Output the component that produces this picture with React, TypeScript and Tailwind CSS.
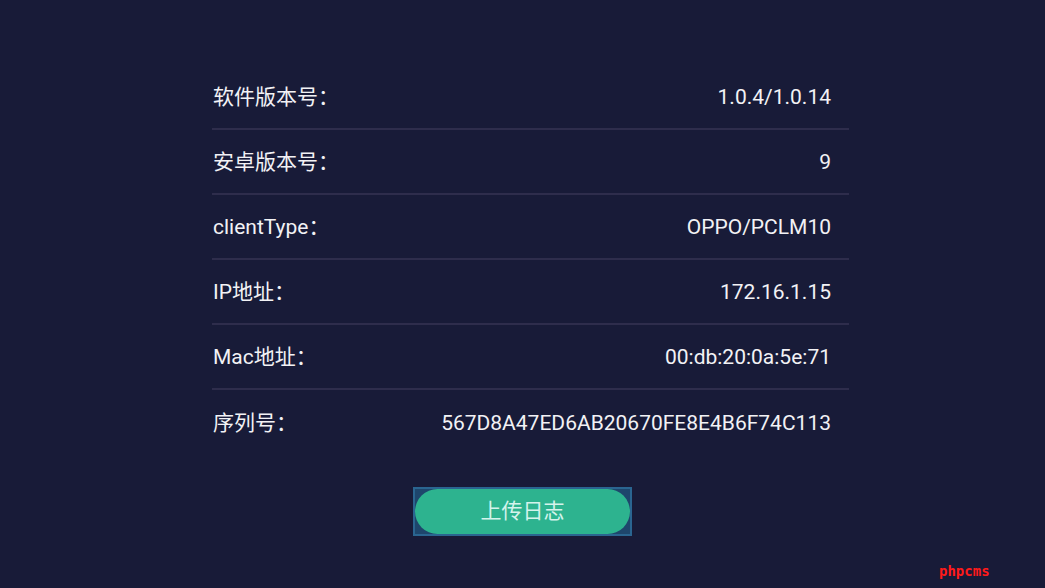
const rows = [
  { label: '软件版本号：', value: '1.0.4/1.0.14' },
  { label: '安卓版本号：', value: '9' },
  { label: 'clientType：', value: 'OPPO/PCLM10' },
  { label: 'IP地址：', value: '172.16.1.15' },
  { label: 'Mac地址：', value: '00:db:20:0a:5e:71' },
  { label: '序列号：', value: '567D8A47ED6AB20670FE8E4B6F74C113' },
];

export default function App() {
  return (
    <div
      className="relative w-[1045px] h-[588px] bg-[#181b38] text-white overflow-hidden"
      style={{ fontFamily: 'Roboto, "Noto Sans CJK SC", sans-serif' }}
    >
      <div className="flex flex-col items-start pt-[65px] pl-[212px]">
        <div className="w-[637px] flex flex-col">
          {rows.map((row, i) => (
            <div
              key={row.label}
              className={`h-[65px] flex items-center justify-between pl-[1px] pr-[18px] pt-[3px] text-[21px] text-[#f2f2f5] ${
                i < rows.length - 1 ? 'border-b-2 border-[#2e2d4c]' : ''
              }`}
            >
              <span>{row.label}</span>
              <span>{row.value}</span>
            </div>
          ))}
        </div>
        <div className="mt-[32px] ml-[201px] w-[219px] h-[49px] border-2 border-[#2a6590] bg-[#1e466c]">
          <button className="w-full h-full rounded-full bg-[#2db38f] text-[21px] text-[#d4f3ec] flex items-center justify-center">
            上传日志
          </button>
        </div>
      </div>
      <div
        className="absolute left-[939px] top-[561px] text-[14px] font-bold text-[#ff1a1a]"
        style={{ fontFamily: '"DejaVu Sans Mono", monospace' }}
      >
        phpcms
      </div>
    </div>
  );
}
